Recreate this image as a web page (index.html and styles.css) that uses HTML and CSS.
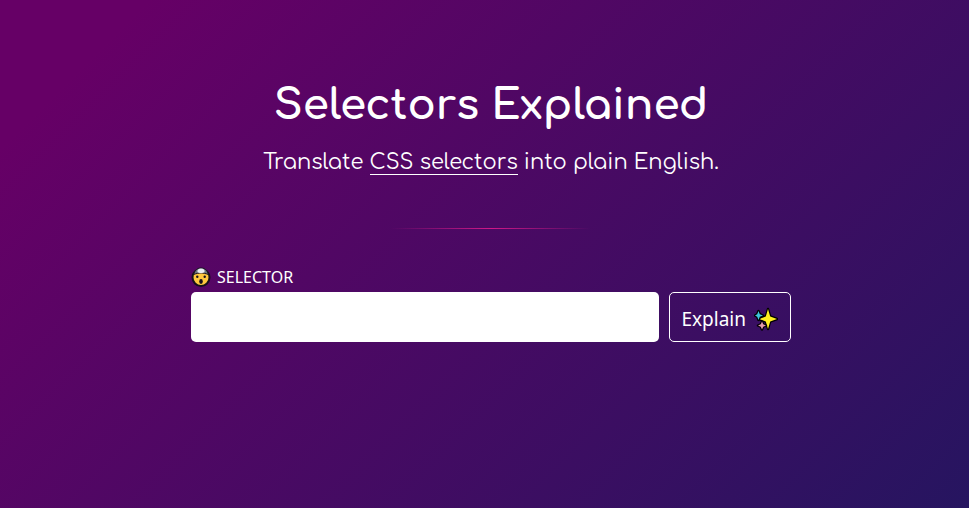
FILE: index.html
```html
<!DOCTYPE html>
<html lang="en">
<head>
<meta charset="utf-8">
<meta name="viewport" content="width=device-width, initial-scale=1">
<title>Selectors Explained</title>
<link rel="stylesheet" href="styles.css">
</head>
<body>
<main class="page">
  <header class="intro">
    <h1 class="title">Selectors Explained</h1>
    <p class="tagline">Translate <a class="link" href="#selector">CSS selectors</a> into plain English.</p>
  </header>
  <hr class="divider">
  <form class="form">
    <label class="label" for="selector">
      <svg class="face" viewBox="0 0 20 20" aria-hidden="true">
        <circle cx="10" cy="10.5" r="8.5" fill="#ffc83d" stroke="#17101c" stroke-width="2"/>
        <path d="M2.500 7.500C4 3 6.500 1 10 1s6 2 7.500 6.500C14.500 6.500 12.500 6 10 6S5.500 6.500 2.500 7.500z" fill="#6d7781" stroke="#17101c"/>
        <path d="M6.500 5C6 3 7.500 1.500 10 1.500S14 3 13.500 5c-.8 1.500-6.200 1.500-7 0z" fill="#e9eef2"/>
        <circle cx="6.300" cy="9.800" r="1.200" fill="#17101c"/>
        <circle cx="13.700" cy="9.800" r="1.200" fill="#17101c"/>
        <ellipse cx="10" cy="14.500" rx="1.800" ry="2.400" fill="#17101c"/>
      </svg>
      <span>SELECTOR</span>
    </label>
    <div class="row">
      <input class="field" id="selector" type="text" autocomplete="off">
      <button class="button" type="button">
        <span>Explain</span>
        <svg class="sparkles" viewBox="0 0 24 24" aria-hidden="true">
          <g stroke="#000" stroke-width="2.400" stroke-linejoin="round" paint-order="stroke">
            <path d="M14 2l2.200 7.500 6.800 2.500-6.800 2.500L14 22l-2.200-7.500L5 12l6.800-2.500z" fill="#fff01f"/>
            <path d="M4.500 4l1.300 3.200L9 8.500 5.800 9.800 4.500 13 3.200 9.800 1 8.500l2.200-1.300z" fill="#3fc4dc"/>
            <path d="M8 14.500l1.200 2.800L12 18.500l-2.800 1.200L8 22.500l-1.200-2.800L4 18.500l2.800-1.200z" fill="#e59aad"/>
          </g>
        </svg>
      </button>
    </div>
  </form>
</main>
</body>
</html>
```
FILE: styles.css
```css
* {
  box-sizing: border-box;
}

body {
  margin: 0;
  min-height: 100vh;
  color: #fff;
  font-family: "Noto Sans", "Open Sans", sans-serif;
  background: linear-gradient(135deg, #606 10%, #261560 100%);
}

.page {
  display: flex;
  flex-direction: column;
  align-items: center;
  padding: 74px 16px 32px 29px;
}

.intro {
  font-family: Comfortaa, Quicksand, Lato, sans-serif;
  text-align: center;
}

.title {
  margin: 0;
  font-size: 42px;
  line-height: 64px;
  font-weight: 700;
}

.tagline {
  margin: 8px 0 0;
  font-size: 21px;
  line-height: 32px;
}

.link {
  color: inherit;
  text-decoration: none;
  border-bottom: 1px solid #fff;
}

.divider {
  width: 200px;
  height: 1px;
  margin: 50px 0 36px;
  border: 0;
  background: linear-gradient(90deg, transparent, #d01888, transparent);
}

.form {
  width: 100%;
  max-width: 600px;
}

.label {
  display: flex;
  align-items: center;
  gap: 6px;
  font-size: 16px;
  line-height: 24px;
}

.face {
  width: 20px;
  height: 20px;
}

.row {
  display: flex;
  gap: 10px;
  margin-top: 3px;
}

.field {
  flex: 1;
  min-width: 0;
  height: 50px;
  padding: 0 12px;
  border: 0;
  border-radius: 5px;
  background: #fff;
  font: inherit;
  font-size: 20px;
}

.button {
  display: flex;
  align-items: center;
  gap: 8px;
  height: 50px;
  padding: 3px 12px 0 11px;
  border: 1px solid #fff;
  border-radius: 5px;
  background: transparent;
  color: inherit;
  font: inherit;
  font-size: 19px;
}

.sparkles {
  width: 24px;
  height: 24px;
}
```
